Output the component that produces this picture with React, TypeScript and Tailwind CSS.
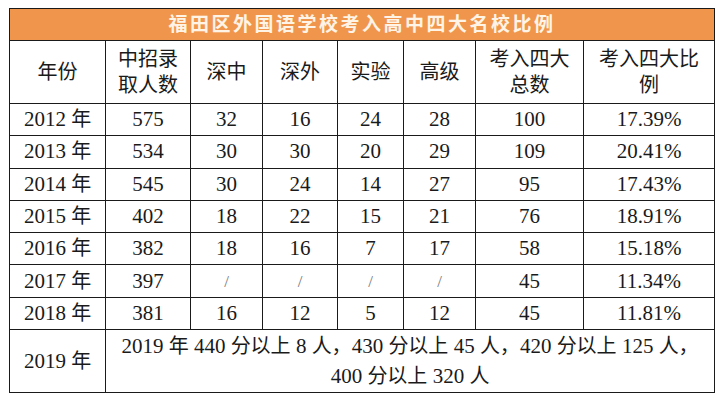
import React from 'react'

const font = { fontFamily: '"Liberation Serif", "Noto Sans CJK SC", serif' }

const widths = [96, 85, 72, 75, 66, 72, 108, 131]

const rows: string[][] = [
  ['2012 年', '575', '32', '16', '24', '28', '100', '17.39%'],
  ['2013 年', '534', '30', '30', '20', '29', '109', '20.41%'],
  ['2014 年', '545', '30', '24', '14', '27', '95', '17.43%'],
  ['2015 年', '402', '18', '22', '15', '21', '76', '18.91%'],
  ['2016 年', '382', '18', '16', '7', '17', '58', '15.18%'],
  ['2017 年', '397', '/', '/', '/', '/', '45', '11.34%'],
  ['2018 年', '381', '16', '12', '5', '12', '45', '11.81%'],
]

const cell = 'border border-[#1a1a1a] text-center align-middle p-0'

// CJK glyphs run a bit smaller than the serif digits next to them
function Mixed({ text }: { text: string }) {
  const parts = text.match(/[\u3000-\u9fff\uff00-\uffef]+|[^\u3000-\u9fff\uff00-\uffef]+/g) ?? []
  return (
    <>
      {parts.map((p, i) =>
        /[\u3000-\u9fff\uff00-\uffef]/.test(p) ? (
          <span key={i} className="text-[20px]">
            {p}
          </span>
        ) : (
          <span key={i}>{p}</span>
        ),
      )}
    </>
  )
}

export default function App() {
  return (
    <div className="w-[723px] h-[402px] bg-white pt-[8px] pl-[9px] text-[#1a1a1a]" style={font}>
      <table className="table-fixed border-collapse w-[705px]">
        <colgroup>
          {widths.map((w, i) => (
            <col key={i} style={{ width: w }} />
          ))}
        </colgroup>
        <tbody>
          <tr className="h-[32px]">
            <td
              colSpan={8}
              className={`${cell} bg-[#f0964c] text-[#fff4e6] text-[19px] font-bold tracking-[2.5px] leading-none`}
            >
              福田区外国语学校考入高中四大名校比例
            </td>
          </tr>
          <tr className="h-[63px] text-[20px] leading-[26px]">
            <td className={cell}>年份</td>
            <td className={cell}>
              中招录
              <br />
              取人数
            </td>
            <td className={cell}>深中</td>
            <td className={cell}>深外</td>
            <td className={cell}>实验</td>
            <td className={cell}>高级</td>
            <td className={cell}>
              考入四大
              <br />
              总数
            </td>
            <td className={cell}>
              考入四大比
              <br />
              例
            </td>
          </tr>
          {rows.map((r) => (
            <tr key={r[0]} className="h-[32.3px] text-[21px] leading-none">
              {r.map((v, i) => (
                <td key={i} className={`${cell} ${v === '/' ? 'text-[#777] text-[17px]' : ''}`}>
                  <Mixed text={v} />
                </td>
              ))}
            </tr>
          ))}
          <tr className="h-[63px] text-[21px] leading-[30px]">
            <td className={cell}>
              <Mixed text="2019 年" />
            </td>
            <td colSpan={7} className={cell}>
              <Mixed text="2019 年 440 分以上 8 人，430 分以上 45 人，420 分以上 125 人，" />
              <br />
              <Mixed text="400 分以上 320 人" />
            </td>
          </tr>
        </tbody>
      </table>
    </div>
  )
}
